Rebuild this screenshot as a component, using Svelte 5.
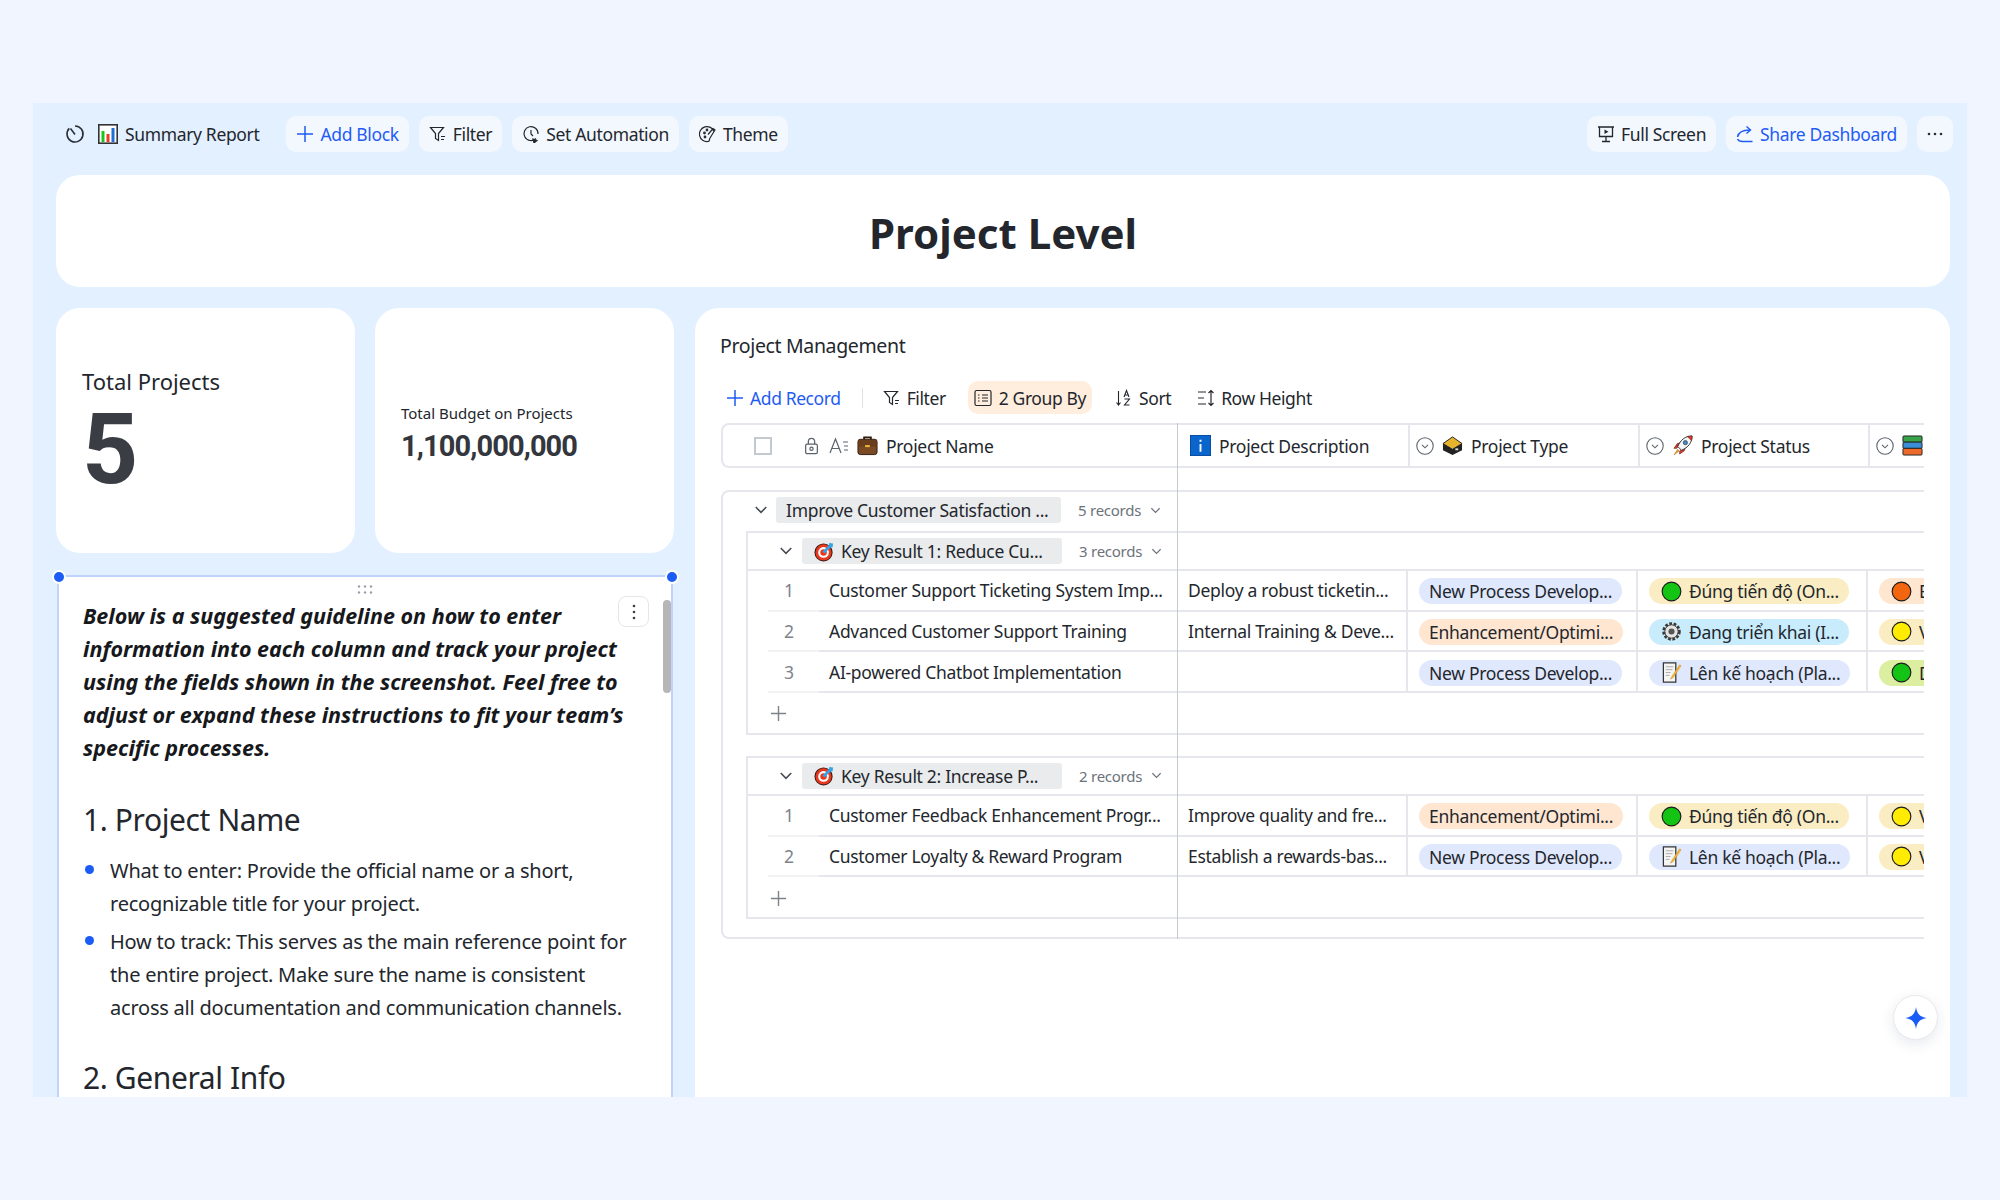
<script lang="ts">
	type Pill = { label: string; tone: string; icon?: string };
	type Row = { no: number; name: string; desc: string; type: Pill; status: Pill; next: Pill };

	const newProcess: Pill = { label: 'New Process Develop...', tone: 'blue' };
	const enhancement: Pill = { label: 'Enhancement/Optimi...', tone: 'peach' };
	const onTrack: Pill = { label: 'Đúng tiến độ (On...', tone: 'sand', icon: 'green' };
	const inProgress: Pill = { label: 'Đang triển khai (I...', tone: 'sky', icon: 'gear' };
	const planned: Pill = { label: 'Lên kế hoạch (Pla...', tone: 'blue', icon: 'memo' };

	const groups = [
		{
			title: 'Key Result 1: Reduce Cu...',
			count: '3 records',
			rows: [
				{ no: 1, name: 'Customer Support Ticketing System Imp...', desc: 'Deploy a robust ticketin...', type: newProcess, status: onTrack, next: { label: 'E', tone: 'peach', icon: 'orange' } },
				{ no: 2, name: 'Advanced Customer Support Training', desc: 'Internal Training & Deve...', type: enhancement, status: inProgress, next: { label: 'V', tone: 'sand', icon: 'yellow' } },
				{ no: 3, name: 'AI-powered Chatbot Implementation', desc: '', type: newProcess, status: planned, next: { label: 'D', tone: 'lime', icon: 'green' } }
			] as Row[]
		},
		{
			title: 'Key Result 2: Increase P...',
			count: '2 records',
			rows: [
				{ no: 1, name: 'Customer Feedback Enhancement Progr...', desc: 'Improve quality and fre...', type: enhancement, status: onTrack, next: { label: 'V', tone: 'sand', icon: 'yellow' } },
				{ no: 2, name: 'Customer Loyalty & Reward Program', desc: 'Establish a rewards-bas...', type: newProcess, status: planned, next: { label: 'V', tone: 'sand', icon: 'yellow' } }
			] as Row[]
		}
	];
</script>

{#snippet chevron(cls = 'chev')}
	<svg class={cls} viewBox="0 0 12 12" fill="none" stroke="currentColor" stroke-width="1.3"><path d="M1.5 3.5l4.5 4.5 4.5-4.5" /></svg>
{/snippet}

{#snippet plus(cls = 'ico')}
	<svg class={cls} viewBox="0 0 18 18" fill="none" stroke="currentColor" stroke-width="1.5"><path d="M9 1v16M1 9h16" /></svg>
{/snippet}

{#snippet filterIcon()}
	<svg class="ico" viewBox="0 0 18 18" fill="none" stroke="currentColor" stroke-width="1.2"><path d="M1.5 2.5h13l-5 6v7l-3-2v-5z" /><path d="M12 11.5h4M12 14.5h3" /></svg>
{/snippet}

{#snippet target()}
	<svg class="emoji" viewBox="0 0 22 22"><circle cx="10" cy="12" r="9.5" fill="#2b1a14" /><circle cx="10" cy="12" r="8.5" fill="#e8391f" /><circle cx="10" cy="12" r="5.6" fill="#fff" /><circle cx="10" cy="12" r="3.4" fill="#e8391f" /><path d="M10 12l8-8" stroke="#35a3e8" stroke-width="3" /><path d="M16 2l4 .5-.5 4-3 .5-1-1.5z" fill="#35a3e8" /></svg>
{/snippet}

{#snippet dot(color: string)}
	<svg class="emoji" viewBox="0 0 22 22"><circle cx="11" cy="11" r="9.8" fill={color} stroke="#1c1c1c" stroke-width="1.2" /></svg>
{/snippet}

{#snippet gear()}
	<svg class="emoji" viewBox="0 0 22 22"><circle cx="11" cy="11" r="8" fill="#e8e8e8" stroke="#3a3a3a" stroke-width="3.4" stroke-dasharray="2.8 1.6" /><circle cx="11" cy="11" r="7" fill="#e4e4e4" stroke="#3a3a3a" stroke-width="1" /><circle cx="11" cy="11" r="3.2" fill="#555" /></svg>
{/snippet}

{#snippet memo()}
	<svg class="emoji" viewBox="0 0 22 22"><path d="M2.5 1h13v20h-13z" fill="#f4f4f4" stroke="#333" stroke-width="1.3" /><path d="M5 5h8M5 8h7M5 11h5M5 14h4" stroke="#aaa" stroke-width="1" /><path d="M19.5 3l-8 12-1.5 3 3-2 8-12z" fill="#f5b93a" stroke="#c98a20" stroke-width=".5" /></svg>
{/snippet}

{#snippet pill(p: Pill)}
	<span class="pill {p.tone}">
		{#if p.icon === 'gear'}{@render gear()}
		{:else if p.icon === 'memo'}{@render memo()}
		{:else if p.icon === 'green'}{@render dot('#14c414')}
		{:else if p.icon === 'orange'}{@render dot('#f4650f')}
		{:else if p.icon === 'yellow'}{@render dot('#ffec00')}
		{/if}
		<span>{p.label}</span>
	</span>
{/snippet}

{#snippet circleChevron()}
	<svg class="ico circle" viewBox="0 0 18 18" fill="none" stroke="currentColor" stroke-width="1.1"><circle cx="9" cy="9" r="8.2" /><path d="M6 7.8l3 3 3-3" /></svg>
{/snippet}

<div class="dashboard">
	<header class="topbar">
		<div class="topbar-side">
			<svg class="history" viewBox="0 0 20 20" fill="none" stroke="#2a2f36" stroke-width="1.6"><path d="M10 2a8 8 0 1 1-5.7 2.4" /><path d="M5.5 4.5l4.500 6" /></svg>
			<svg class="report-icon" viewBox="0 0 20 20"><rect x=".8" y=".8" width="18.4" height="18.4" fill="#fff" stroke="#333" stroke-width="1.6" /><rect x="3.5" y="7" width="3" height="11" fill="#1ec41e" /><rect x="8.5" y="10" width="3" height="8" fill="#ee3b24" /><rect x="13.5" y="4" width="3" height="14" fill="#1f6fd8" /></svg>
			<span class="report-name">Summary Report</span>
			<button class="tool accent">{@render plus()}Add Block</button>
			<button class="tool">{@render filterIcon()}Filter</button>
			<button class="tool">
				<svg class="ico" viewBox="0 0 18 18" fill="none" stroke="currentColor" stroke-width="1.2"><path d="M14 13.5A7 7 0 1 1 16 9" /><path d="M9 5v4l2 2" /><path d="M11 14l4 1.5-3 2.5z" fill="currentColor" /></svg>
				Set Automation
			</button>
			<button class="tool">
				<svg class="ico" viewBox="0 0 18 18" fill="none" stroke="currentColor" stroke-width="1.2"><path d="M15 6.5A7.5 7.5 0 1 0 9 16.5c2 0 1-2 2-3.5l5-8-2-1.5-5 6" /><circle cx="5.5" cy="8" r=".8" /><circle cx="8" cy="5" r=".8" /><circle cx="6" cy="12" r=".8" /></svg>
				Theme
			</button>
		</div>
		<div class="topbar-side">
			<button class="tool">
				<svg class="ico" viewBox="0 0 18 18" fill="none" stroke="currentColor" stroke-width="1.3"><path d="M1 2h16M2.5 2v9.5h13V2M9 11.5V16M5 16.5h8" /><path d="M7.5 4.5l4 2.3-4 2.3z" fill="currentColor" stroke="none" /></svg>
				Full Screen
			</button>
			<button class="tool accent">
				<svg class="ico" viewBox="0 0 18 18" fill="none" stroke="currentColor" stroke-width="1.4"><path d="M1.5 12c1-5 5-7 12-7M10.5 1.5L14.5 5l-4 3.5" /><path d="M1.5 14c1 2 3 2.5 5 2.5h10" /></svg>
				Share Dashboard
			</button>
			<button class="tool more" aria-label="More">
				<svg viewBox="0 0 16 4" width="16" height="4" fill="#2a2f36"><circle cx="2" cy="2" r="1.3" /><circle cx="8" cy="2" r="1.3" /><circle cx="14" cy="2" r="1.3" /></svg>
			</button>
		</div>
	</header>

	<section class="title-card"><h1>Project Level</h1></section>

	<div class="board">
		<div class="left-col">
			<div class="stats">
				<div class="stat">
					<p class="stat-big-label">Total Projects</p>
					<p class="stat-big">5</p>
				</div>
				<div class="stat">
					<p class="stat-small-label">Total Budget on Projects</p>
					<p class="stat-small">1,100,000,000</p>
				</div>
			</div>

			<article class="guide">
				<span class="handle h-left"></span>
				<span class="handle h-right"></span>
				<svg class="grip" viewBox="0 0 16 9" fill="#9aa0a8"><circle cx="2" cy="1.5" r="1.2" /><circle cx="8" cy="1.5" r="1.2" /><circle cx="14" cy="1.5" r="1.2" /><circle cx="2" cy="7.5" r="1.2" /><circle cx="8" cy="7.5" r="1.2" /><circle cx="14" cy="7.5" r="1.2" /></svg>
				<button class="guide-more" aria-label="More">
					<svg viewBox="0 0 4 16" width="4" height="16" fill="#3a3f46"><circle cx="2" cy="2" r="1.3" /><circle cx="2" cy="8" r="1.3" /><circle cx="2" cy="14" r="1.3" /></svg>
				</button>
				<span class="scroll-thumb"></span>

				<p class="lead">Below is a suggested guideline on how to enter information into each column and track your project using the fields shown in the screenshot. Feel free to adjust or expand these instructions to fit your team’s specific processes.</p>
				<h2>1. Project Name</h2>
				<ul>
					<li>What to enter: Provide the official name or a short, recognizable title for your project.</li>
					<li>How to track: This serves as the main reference point for the entire project. Make sure the name is consistent across all documentation and communication channels.</li>
				</ul>
				<h2 class="second">2. General Info</h2>
			</article>
		</div>

		<section class="table-card">
			<h3>Project Management</h3>
			<div class="table-tools">
				<button class="tt accent">{@render plus()}Add Record</button>
				<span class="tt-divider"></span>
				<button class="tt">{@render filterIcon()}Filter</button>
				<button class="tt grouped">
					<svg class="ico" viewBox="0 0 18 18" fill="none" stroke="currentColor" stroke-width="1.2"><rect x="1" y="1.5" width="16" height="15" rx="1.5" /><path d="M4 6h1.5M8 6h6M4 9h1.5M8 9h6M4 12h1.5M8 12h6" /></svg>
					2 Group By
				</button>
				<button class="tt">
					<svg class="ico" viewBox="0 0 18 18" fill="none" stroke="currentColor" stroke-width="1.1"><path d="M3.5 2v14M1.5 13.5l2 2.5 2-2.5" /><path d="M9 8l2.5-6.5L14 8M10 6h3M9.5 10h5l-5 6h5" /></svg>
					Sort
				</button>
				<button class="tt row-height">
					<svg class="ico" viewBox="0 0 18 18" fill="none" stroke="currentColor" stroke-width="1.2"><path d="M1 3h8M1 9h6M1 15h8" /><path d="M14 1.5v15M11.5 4L14 1.5 16.5 4M11.5 14l2.5 2.5 2.5-2.5" /></svg>
					Row Height
				</button>
			</div>

			<div class="table">
				<span class="freeze-line"></span>
				<div class="thead">
					<div class="th-name">
						<span class="checkbox"></span>
						<svg class="ico lock" viewBox="0 0 16 20" fill="none" stroke="currentColor" stroke-width="1.4"><path d="M4.5 8V5a3.5 3.5 0 0 1 7 0v3" /><rect x="1.5" y="8" width="13" height="10.5" rx="1.5" /><circle cx="8" cy="13" r="1.8" /></svg>
						<svg class="ico text-type" viewBox="0 0 20 18" fill="none" stroke="currentColor" stroke-width="1.2"><path d="M1 16L6.5 2 12 16M3 11.5h7M14 5h5M15 9h4M15 13h4" /></svg>
						<svg class="emoji" viewBox="0 0 22 22"><path d="M7.5 5V2.5h7V5" fill="none" stroke="#2e1a0e" stroke-width="2" /><rect x="1" y="4.5" width="20" height="16" rx="2.5" fill="#7a4a24" stroke="#2e1a0e" stroke-width="1" /><rect x="1.5" y="5" width="19" height="7" fill="#6a3d1c" /><rect x="8.5" y="10.5" width="5" height="2.2" fill="#e9b23a" /></svg>
						<span>Project Name</span>
					</div>
					<div class="th th-desc">
						<svg class="emoji" viewBox="0 0 22 22"><rect width="22" height="22" fill="#0a66cc" stroke="#053a7a" /><path d="M11 5v2M11 9.5v8" stroke="#fff" stroke-width="2" /></svg>
						<span>Project Description</span>
					</div>
					<div class="th">
						{@render circleChevron()}
						<svg class="emoji" viewBox="0 0 22 22"><path d="M1 9l10-7 10 7-10 6z" fill="#e8b32c" stroke="#1e1e1e" /><path d="M1 9v7l10 5 10-5V9l-10 6z" fill="#222" /><rect x="14" y="14" width="3" height="2" fill="#ddd" /></svg>
						<span>Project Type</span>
					</div>
					<div class="th">
						{@render circleChevron()}
						<svg class="emoji" viewBox="0 0 22 22"><path d="M5 14l-3 0 3.5-5 4-1zM8 17l0 3 5-3.5 1-4z" fill="#e0352b" stroke="#5a1a14" stroke-width=".6" /><path d="M21 1c-7 0-12 4-15 11l4 4c7-3 11-8 11-15z" fill="#f3f5f7" stroke="#2d2d2d" stroke-width="1" /><path d="M16 1.5c1.5 0 3.5 0 5-.5 0 2 0 3.5-.5 5z" fill="#e0352b" stroke="#5a1a14" stroke-width=".5" /><circle cx="14" cy="8" r="2.2" fill="#3a8ed8" stroke="#2d2d2d" stroke-width=".7" /><path d="M6 15l1.5 1.5L2 21z" fill="#f59a23" stroke="#a85a10" stroke-width=".5" /></svg>
						<span>Project Status</span>
					</div>
					<div class="th">
						{@render circleChevron()}
						<svg class="emoji" viewBox="0 0 22 22"><rect x="1" y="1" width="20" height="6.5" rx="1" fill="#38a449" stroke="#222" /><rect x="1" y="7.5" width="20" height="6.5" rx="1" fill="#3a8ed8" stroke="#222" /><rect x="1" y="14" width="20" height="7" rx="1" fill="#ee6a2a" stroke="#222" /></svg>
					</div>
				</div>

				<div class="outer-group">
					<div class="outer-head">
						{@render chevron('chev toggle')}
						<span class="chip outer-chip">Improve Customer Satisfaction ...</span>
						<span class="count">5 records{@render chevron('chev small')}</span>
					</div>

					{#each groups as g, i (g.title)}
						<div class="inner-group" class:first={i === 0}>
							<div class="inner-head">
								{@render chevron('chev toggle')}
								<span class="chip">{@render target()}<span>{g.title}</span></span>
								<span class="count">{g.count}{@render chevron('chev small')}</span>
							</div>
							{#each g.rows as r (r.no)}
								<div class="row">
									<div class="index">{r.no}</div>
									<div class="name">{r.name}</div>
									<div class="cell desc">{r.desc}</div>
									<div class="cell">{@render pill(r.type)}</div>
									<div class="cell">{@render pill(r.status)}</div>
									<div class="cell last">{@render pill(r.next)}</div>
								</div>
							{/each}
							<div class="add-row">{@render plus('add-plus')}</div>
						</div>
					{/each}
				</div>
			</div>

			<button class="ai-btn" aria-label="AI assistant">
				<svg viewBox="0 0 24 24" width="24" height="24" fill="#1a5cf5"><path d="M12 1c1 7 4 10 11 11-7 1-10 4-11 11-1-7-4-10-11-11 7-1 10-4 11-11z" /></svg>
			</button>
		</section>
	</div>
</div>

<style>
	:global(body) {
		background: #f0f5ff;
	}

	.dashboard {
		box-sizing: border-box;
		width: 1934px;
		height: 994px;
		margin: 103px 0 0 33px;
		padding: 13px 17px 0 23px;
		background: #e3f0ff;
		overflow: hidden;
		font-family: 'Noto Sans', sans-serif;
		color: #23272d;
	}

	button {
		font: inherit;
		letter-spacing: inherit;
		color: inherit;
		border: 0;
		background: none;
		padding: 0;
		cursor: pointer;
	}

	.topbar {
		display: flex;
		justify-content: space-between;
		height: 36px;
		margin: 0 -3px 23px 0;
		font-size: 17.5px;
		letter-spacing: -0.35px;
	}

	.topbar-side {
		display: flex;
		align-items: center;
		gap: 10px;
	}

	.history {
		width: 20px;
		height: 20px;
		margin-left: 9px;
		margin-right: 3px;
	}

	.report-icon {
		width: 20px;
		height: 20px;
	}

	.report-name {
		margin-left: -3px;
		margin-right: 17px;
	}

	.tool {
		display: flex;
		align-items: center;
		gap: 6px;
		height: 36px;
		padding: 0 10px;
		background: #f3f8ff;
		border-radius: 10px;
	}

	.more {
		width: 36px;
		padding: 0;
		justify-content: center;
	}

	.accent {
		color: #1f5bf5;
	}

	.ico {
		width: 18px;
		height: 18px;
		flex: none;
		color: inherit;
	}

	.title-card {
		height: 112px;
		background: #fff;
		border-radius: 24px;
		margin-bottom: 21px;
		display: flex;
		justify-content: center;
		align-items: center;
	}

	h1 {
		margin: 0;
		font-size: 42px;
		font-weight: 700;
		position: relative;
		top: 1px;
	}

	.board {
		display: grid;
		grid-template-columns: 618px 1255px;
		gap: 21px;
		height: 810px;
	}

	.left-col {
		display: flex;
		flex-direction: column;
		gap: 22px;
		min-width: 0;
	}

	.stats {
		display: grid;
		grid-template-columns: 299px 299px;
		gap: 20px;
	}

	.stat {
		height: 245px;
		box-sizing: border-box;
		padding: 8px 26px 0;
		background: #fff;
		border-radius: 24px;
		display: flex;
		flex-direction: column;
		justify-content: center;
	}

	.stat p {
		margin: 0;
	}

	.stat .stat-big-label {
		font-size: 22px;
		line-height: 30px;
		margin: -1px 0 1px;
	}

	.stat-big {
		font-family: Roboto, sans-serif;
		font-weight: 700;
		font-size: 98px;
		line-height: 106px;
		color: #3a3e44;
	}

	.stat .stat-small-label {
		font-size: 15px;
		line-height: 22px;
		margin: -2px 0 2px;
	}

	.stat-small {
		font-family: Roboto, sans-serif;
		font-weight: 700;
		font-size: 29px;
		letter-spacing: -0.9px;
		line-height: 40px;
		color: #33373d;
	}

	.guide {
		position: relative;
		flex: 1;
		min-height: 0;
		box-sizing: border-box;
		margin: 0 1px;
		padding: 22px 36px 0 24px;
		background: #fff;
		border: 2px solid #c0d3ff;
		border-bottom: 0;
		font-size: 20px;
		letter-spacing: -0.22px;
		line-height: 33px;
	}

	.handle {
		position: absolute;
		top: -7px;
		width: 10px;
		height: 10px;
		border-radius: 50%;
		background: #1a5cf5;
		border: 2px solid #fff;
	}

	.h-left {
		left: -7px;
	}

	.h-right {
		right: -8px;
	}

	.grip {
		position: absolute;
		top: 8px;
		left: 298px;
		width: 16px;
		height: 9px;
	}

	.guide-more {
		position: absolute;
		top: 19px;
		right: 22px;
		width: 31px;
		height: 31px;
		display: flex;
		align-items: center;
		justify-content: center;
		border: 1px solid #e4e6eb;
		border-radius: 8px;
		background: #fff;
	}

	.scroll-thumb {
		position: absolute;
		top: 23px;
		right: 0;
		width: 8px;
		height: 93px;
		border-radius: 4px;
		background: #b6b6b6;
	}

	.lead {
		margin: 0;
		font-size: 21.5px;
		letter-spacing: 0;
		font-weight: 700;
		font-style: italic;
		color: #16181c;
	}

	h2 {
		margin: 36px 0 0;
		font-size: 30px;
		letter-spacing: -0.4px;
		line-height: 40px;
		font-weight: 400;
	}

	h2.second {
		margin-top: 34px;
	}

	ul {
		margin: 12px 0 0;
		padding: 0 0 0 27px;
	}

	li {
		margin-bottom: 3px;
	}

	li::marker {
		color: #1a5cf5;
		font-size: 1.3em;
	}

	.table-card {
		position: relative;
		background: #fff;
		border-radius: 24px 24px 0 0;
		padding: 23px 25px 0;
	}

	h3 {
		margin: 0;
		font-size: 19.5px;
		letter-spacing: -0.35px;
		line-height: 30px;
		font-weight: 400;
	}

	.table-tools {
		display: flex;
		align-items: center;
		height: 33px;
		margin: 20px 0 9px;
		font-size: 17.5px;
		letter-spacing: -0.4px;
	}

	.tt {
		display: flex;
		align-items: center;
		gap: 6px;
		height: 33px;
		padding: 0 6px;
		border-radius: 10px;
		white-space: nowrap;
	}

	.tt-divider {
		width: 1px;
		height: 20px;
		background: #dfe1e6;
		margin: 0 14px 0 15px;
	}

	.grouped {
		background: #ffeedd;
		gap: 7px;
		margin: 0 17px 0 16px;
	}

	.row-height {
		margin-left: 14px;
	}

	.table {
		position: relative;
		width: 1203px;
		margin-left: 1px;
		overflow: hidden;
		font-size: 17.5px;
		letter-spacing: -0.3px;
		padding-bottom: 4px;
	}

	.freeze-line {
		position: absolute;
		top: 0;
		bottom: 4px;
		left: 456px;
		width: 1px;
		background: #c6c9d1;
		z-index: 1;
	}

	.thead {
		display: flex;
		height: 45px;
		box-sizing: border-box;
		border: 2px solid #e6e7ec;
		border-right: 0;
		border-radius: 8px 0 0 8px;
		margin-bottom: 22px;
	}

	.th-name {
		flex: none;
		width: 454px;
		display: flex;
		align-items: center;
		box-sizing: border-box;
		padding-left: 31px;
		gap: 8px;
	}

	.checkbox {
		width: 18px;
		height: 18px;
		border: 2px solid #c4c8cf;
		box-sizing: border-box;
		margin-right: 24px;
	}

	.lock {
		width: 15px;
		height: 18px;
		margin-right: 2px;
		color: #5c636c;
	}

	.text-type {
		width: 20px;
		color: #5c636c;
	}

	.th {
		flex: none;
		width: 230px;
		display: flex;
		align-items: center;
		box-sizing: border-box;
		gap: 8px;
		padding-left: 6px;
		border-left: 2px solid #e6e7ec;
	}

	.th-desc {
		width: 231px;
		padding-left: 13px;
		border-left: 0;
	}

	.circle {
		color: #5c636c;
	}

	.emoji {
		width: 21px;
		height: 21px;
		flex: none;
	}

	.outer-group {
		box-sizing: border-box;
		height: 449px;
		border: 2px solid #e6e7ec;
		border-right: 0;
		border-radius: 8px 0 0 8px;
		padding-left: 23px;
	}

	.outer-head {
		display: flex;
		align-items: center;
		box-sizing: border-box;
		height: 39px;
		padding-bottom: 3px;
		margin-left: -23px;
		padding-left: 31px;
	}

	.inner-head {
		display: flex;
		align-items: center;
		box-sizing: border-box;
		height: 38px;
		border-bottom: 2px solid #e6e7ec;
		padding-left: 31px;
	}

	.chev {
		width: 12px;
		height: 12px;
		flex: none;
	}

	.toggle {
		color: #444a52;
		width: 14px;
		height: 14px;
		margin-right: 8px;
	}

	.inner-head .toggle {
		margin-right: 9px;
	}

	.chip {
		display: flex;
		align-items: center;
		gap: 6px;
		flex: none;
		height: 26px;
		box-sizing: border-box;
		width: 260px;
		padding: 0 10px 0 12px;
		border-radius: 3px;
		background: #e9ebec;
		white-space: nowrap;
	}

	.outer-chip {
		width: 285px;
		padding-left: 10px;
	}

	.count {
		margin-left: 17px;
		display: flex;
		align-items: center;
		gap: 9px;
		color: #6c727a;
		font-size: 15px;
		letter-spacing: -0.25px;
		white-space: nowrap;
	}

	.small {
		width: 11px;
		height: 11px;
	}

	.inner-group {
		border: 2px solid #e6e7ec;
		border-right: 0;
		margin-top: 21px;
	}

	.inner-group.first {
		margin-top: 0;
	}

	.row {
		display: flex;
		height: 40.67px;
		box-sizing: border-box;
	}

	.index {
		flex: none;
		width: 51px;
		margin-left: 20px;
		box-sizing: border-box;
		padding-left: 16px;
		display: flex;
		align-items: center;
		color: #7d838b;
		border-bottom: 2px solid #f1f2f4;
	}

	.name {
		flex: none;
		width: 358px;
		padding-left: 10px;
		box-sizing: border-box;
		display: flex;
		align-items: center;
		white-space: nowrap;
		border-bottom: 2px solid #e6e7ec;
	}

	.cell {
		flex: none;
		width: 230px;
		box-sizing: border-box;
		padding-left: 11px;
		display: flex;
		align-items: center;
		border-right: 2px solid #e6e7ec;
		border-bottom: 2px solid #e6e7ec;
		white-space: nowrap;
	}

	.desc {
		width: 231px;
	}

	.last {
		border-right: 0;
	}

	.pill {
		display: inline-flex;
		align-items: center;
		gap: 7px;
		height: 26px;
		margin-top: 2px;
		padding: 0 10px;
		border-radius: 13px;
		white-space: nowrap;
	}

	.pill .emoji {
		margin-left: 2px;
	}

	.blue {
		background: #e0e8fd;
	}

	.peach {
		background: #ffe6d1;
	}

	.sand {
		background: #faedc3;
	}

	.sky {
		background: #c8ecfc;
	}

	.lime {
		background: #dcee9f;
	}

	.add-row {
		height: 40px;
		padding-top: 2px;
		display: flex;
		align-items: center;
		box-sizing: border-box;
	}

	.add-plus {
		width: 17px;
		height: 17px;
		margin-left: 22px;
		color: #7d838b;
	}

	.ai-btn {
		position: absolute;
		top: 687px;
		right: 12px;
		width: 45px;
		height: 45px;
		border-radius: 50%;
		background: #fff;
		border: 1px solid #e8e9ed;
		box-shadow: 0 4px 14px rgba(20, 40, 90, 0.1);
		display: flex;
		align-items: center;
		justify-content: center;
	}
</style>
